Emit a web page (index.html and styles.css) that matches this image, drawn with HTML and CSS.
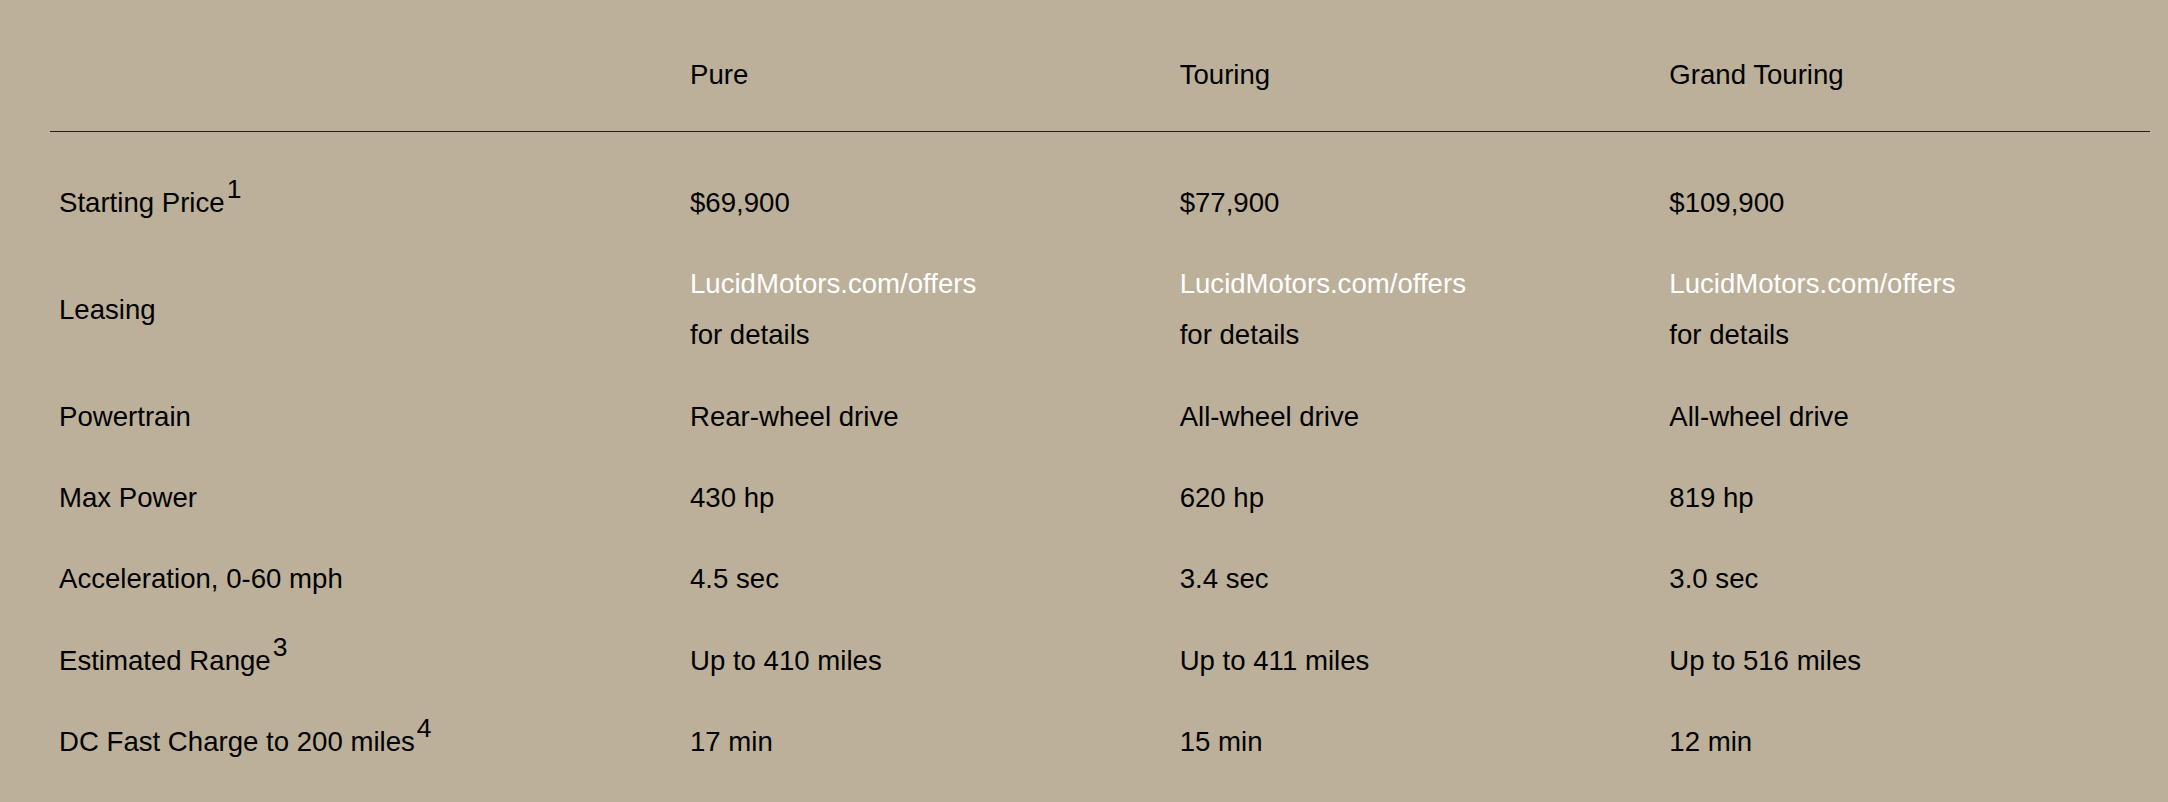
FILE: index.html
```html
<!DOCTYPE html>
<html lang="en">
<head>
    <meta charset="UTF-8">
    <meta name="viewport" content="width=device-width, initial-scale=1.0">
    <title>Lucid Air Specs</title>
    <link rel="stylesheet" href="styles.css">
</head>
<body>
    <div class="container">
        <table class="specs">
            <colgroup>
                <col class="col-label">
                <col class="col-trim">
                <col class="col-trim">
                <col class="col-trim">
            </colgroup>
            <thead>
                <tr>
                    <th></th>
                    <th>Pure</th>
                    <th>Touring</th>
                    <th>Grand Touring</th>
                </tr>
            </thead>
            <tbody>
                <tr>
                    <td>Starting Price<sup>1</sup></td>
                    <td>$69,900</td>
                    <td>$77,900</td>
                    <td>$109,900</td>
                </tr>
                <tr>
                    <td>Leasing</td>
                    <td><a href="#">LucidMotors.com/offers</a><br>for details</td>
                    <td><a href="#">LucidMotors.com/offers</a><br>for details</td>
                    <td><a href="#">LucidMotors.com/offers</a><br>for details</td>
                </tr>
                <tr>
                    <td>Powertrain</td>
                    <td>Rear-wheel drive</td>
                    <td>All-wheel drive</td>
                    <td>All-wheel drive</td>
                </tr>
                <tr>
                    <td>Max Power</td>
                    <td>430 hp</td>
                    <td>620 hp</td>
                    <td>819 hp</td>
                </tr>
                <tr>
                    <td>Acceleration, 0-60 mph</td>
                    <td>4.5 sec</td>
                    <td>3.4 sec</td>
                    <td>3.0 sec</td>
                </tr>
                <tr>
                    <td>Estimated Range<sup>3</sup></td>
                    <td>Up to 410 miles</td>
                    <td>Up to 411 miles</td>
                    <td>Up to 516 miles</td>
                </tr>
                <tr>
                    <td>DC Fast Charge to 200 miles<sup>4</sup></td>
                    <td>17 min</td>
                    <td>15 min</td>
                    <td>12 min</td>
                </tr>
            </tbody>
        </table>
    </div>
</body>
</html>
```

FILE: styles.css
```css
* {
    margin: 0;
    padding: 0;
    box-sizing: border-box;
}

body {
    font-family: 'Liberation Sans', Arial, Helvetica, sans-serif;
    background: #bcb09a;
    color: #000;
    min-height: 100vh;
}

.container {
    padding: 34px 18px 0 50px;
}

.specs {
    width: 2100px;
    border-collapse: collapse;
    table-layout: fixed;
    font-size: 27.6px;
    line-height: 51px;
}

.col-label {
    width: 631px;
}

.col-trim {
    width: 489.67px;
}

.specs th,
.specs td {
    text-align: left;
    font-weight: normal;
    padding: 15.15px 0 15.15px 9px;
    vertical-align: middle;
}

.specs thead th {
    padding-bottom: 31px;
    border-bottom: 1px solid #2a2016;
}

.specs tbody tr:first-child td {
    padding-top: 45px;
}

.specs a {
    color: #fff;
    text-decoration: none;
}

.specs sup {
    font-size: 0.96em;
    line-height: 0;
    vertical-align: 14px;
    margin-left: 2px;
}
```
